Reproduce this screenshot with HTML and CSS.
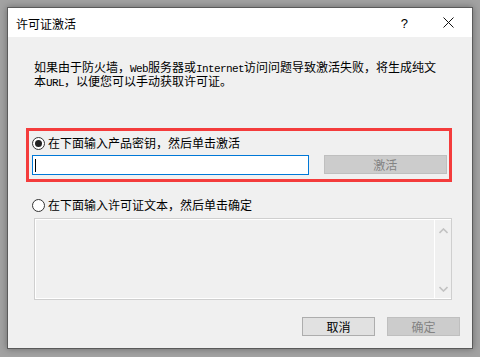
FILE: index.html
```html
<!DOCTYPE html>
<html>
<head>
    <title>许可证激活</title>
    <link rel="stylesheet" href="styles.css">
</head>
<body>

<div class="dialog">
    <div class="titlebar">
        <span class="title">许可证激活</span>
        <span class="help">?</span>
        <span class="close">
            <svg width="11" height="11" viewBox="0 0 11 11"><path d="M0.5 0.5 L10.5 10.5 M10.5 0.5 L0.5 10.5" stroke="#111" stroke-width="1" fill="none"/></svg>
        </span>
    </div>

    <div class="content">
        <p class="desc">如果由于防火墙，<span class="latin">Web</span>服务器或<span class="latin">Internet</span>访问问题导致激活失败，将生成纯文<br>本<span class="latin">URL</span>，以便您可以手动获取许可证。</p>

        <div class="key-box">
            <label class="radio-row">
                <span class="radio checked"></span>
                <span>在下面输入产品密钥，然后单击激活</span>
            </label>
            <div class="key-row">
                <div class="key-input"><span class="caret"></span></div>
                <button class="btn disabled wide">激活</button>
            </div>
        </div>

        <div class="text-box">
            <label class="radio-row">
                <span class="radio"></span>
                <span>在下面输入许可证文本，然后单击确定</span>
            </label>
            <div class="license-text">
                <div class="text-area"></div>
                <div class="scrollbar">
                    <svg width="9" height="6" viewBox="0 0 9 6"><path d="M0.5 5 L4.5 1 L8.5 5" stroke="#c2c2c2" stroke-width="1.6" fill="none"/></svg>
                    <svg width="9" height="6" viewBox="0 0 9 6"><path d="M0.5 1 L4.5 5 L8.5 1" stroke="#c2c2c2" stroke-width="1.6" fill="none"/></svg>
                </div>
            </div>
        </div>

        <div class="actions">
            <button class="btn">取消</button>
            <button class="btn disabled">确定</button>
        </div>
    </div>
</div>

</body>
</html>
```

FILE: styles.css
```css
body {
    margin: 0;
    padding: 7px;
    background-color: #a2a2a2;
    font-family: "Noto Sans CJK SC", "Liberation Sans", sans-serif;
    font-size: 12px;
    color: #000;
}
.dialog {
    width: 464px;
    height: 340px;
    border: 1px solid #5a5a5a;
    background-color: #f0f0f0;
    box-shadow: 0 0 7px rgba(0, 0, 0, 0.35);
    display: flex;
    flex-direction: column;
}
.titlebar {
    height: 29px;
    background-color: white;
    display: flex;
    align-items: center;
    padding-left: 8px;
}
.title {
    flex: 1;
    line-height: 29px;
    padding-top: 1px;
}
.help {
    font-family: "Liberation Sans", sans-serif;
    font-size: 13px;
    margin-right: 35px;
    padding-top: 1px;
}
.close {
    display: flex;
    margin-right: 18px;
}
.content {
    flex: 1;
    display: flex;
    flex-direction: column;
    padding: 0 20px 0 18px;
}
.desc {
    margin: 24px 0 0 8px;
    line-height: 11px;
    height: 24px;
    white-space: nowrap;
}
.latin {
    font-family: "Liberation Mono", monospace;
    font-size: 11px;
    letter-spacing: -0.6px;
}
.key-box {
    margin-top: 43px;
    border: 3px solid #f43c3c;
    padding: 5px 2px 4px 3px;
}
.radio-row {
    display: flex;
    align-items: center;
    gap: 3px;
    height: 14px;
    line-height: 14px;
}
.radio {
    width: 11px;
    height: 11px;
    border: 1px solid #333;
    border-radius: 50%;
    background-color: white;
    display: flex;
    align-items: center;
    justify-content: center;
}
.radio.checked::after {
    content: "";
    width: 7px;
    height: 7px;
    border-radius: 50%;
    background-color: #222;
}
.key-row {
    display: flex;
    gap: 15px;
    margin-top: 5px;
}
.key-input {
    width: 274px;
    height: 18px;
    border: 1px solid #0078d7;
    background-color: white;
    display: flex;
    align-items: center;
    padding-left: 2px;
}
.caret {
    width: 1px;
    height: 13px;
    background-color: #000;
}
.btn {
    width: 73px;
    height: 19px;
    border: 1px solid #adadad;
    background-color: #e1e1e1;
    font-family: "Noto Sans CJK SC", sans-serif;
    font-size: 12px;
    color: #000;
    padding: 0;
    line-height: 17px;
}
.btn.disabled {
    background-color: #cccccc;
    border-color: #bfbfbf;
    color: #838383;
}
.btn.wide {
    width: 124px;
    height: 19px;
}
.text-box {
    margin-top: 16px;
    padding-left: 6px;
}
.license-text {
    margin: 6px 0 0 2px;
    height: 80px;
    border: 1px solid #cfcfcf;
    display: flex;
}
.text-area {
    flex: 1;
    border: 1px solid white;
    border-right: none;
}
.scrollbar {
    width: 16px;
    border-left: 1px solid white;
    border-top: 1px solid white;
    border-bottom: 1px solid white;
    display: flex;
    flex-direction: column;
    justify-content: space-between;
    align-items: center;
    padding: 8px 0 6px;
}
.actions {
    display: flex;
    justify-content: flex-end;
    gap: 12px;
    margin: 17px -8px 0 0;
}
```
